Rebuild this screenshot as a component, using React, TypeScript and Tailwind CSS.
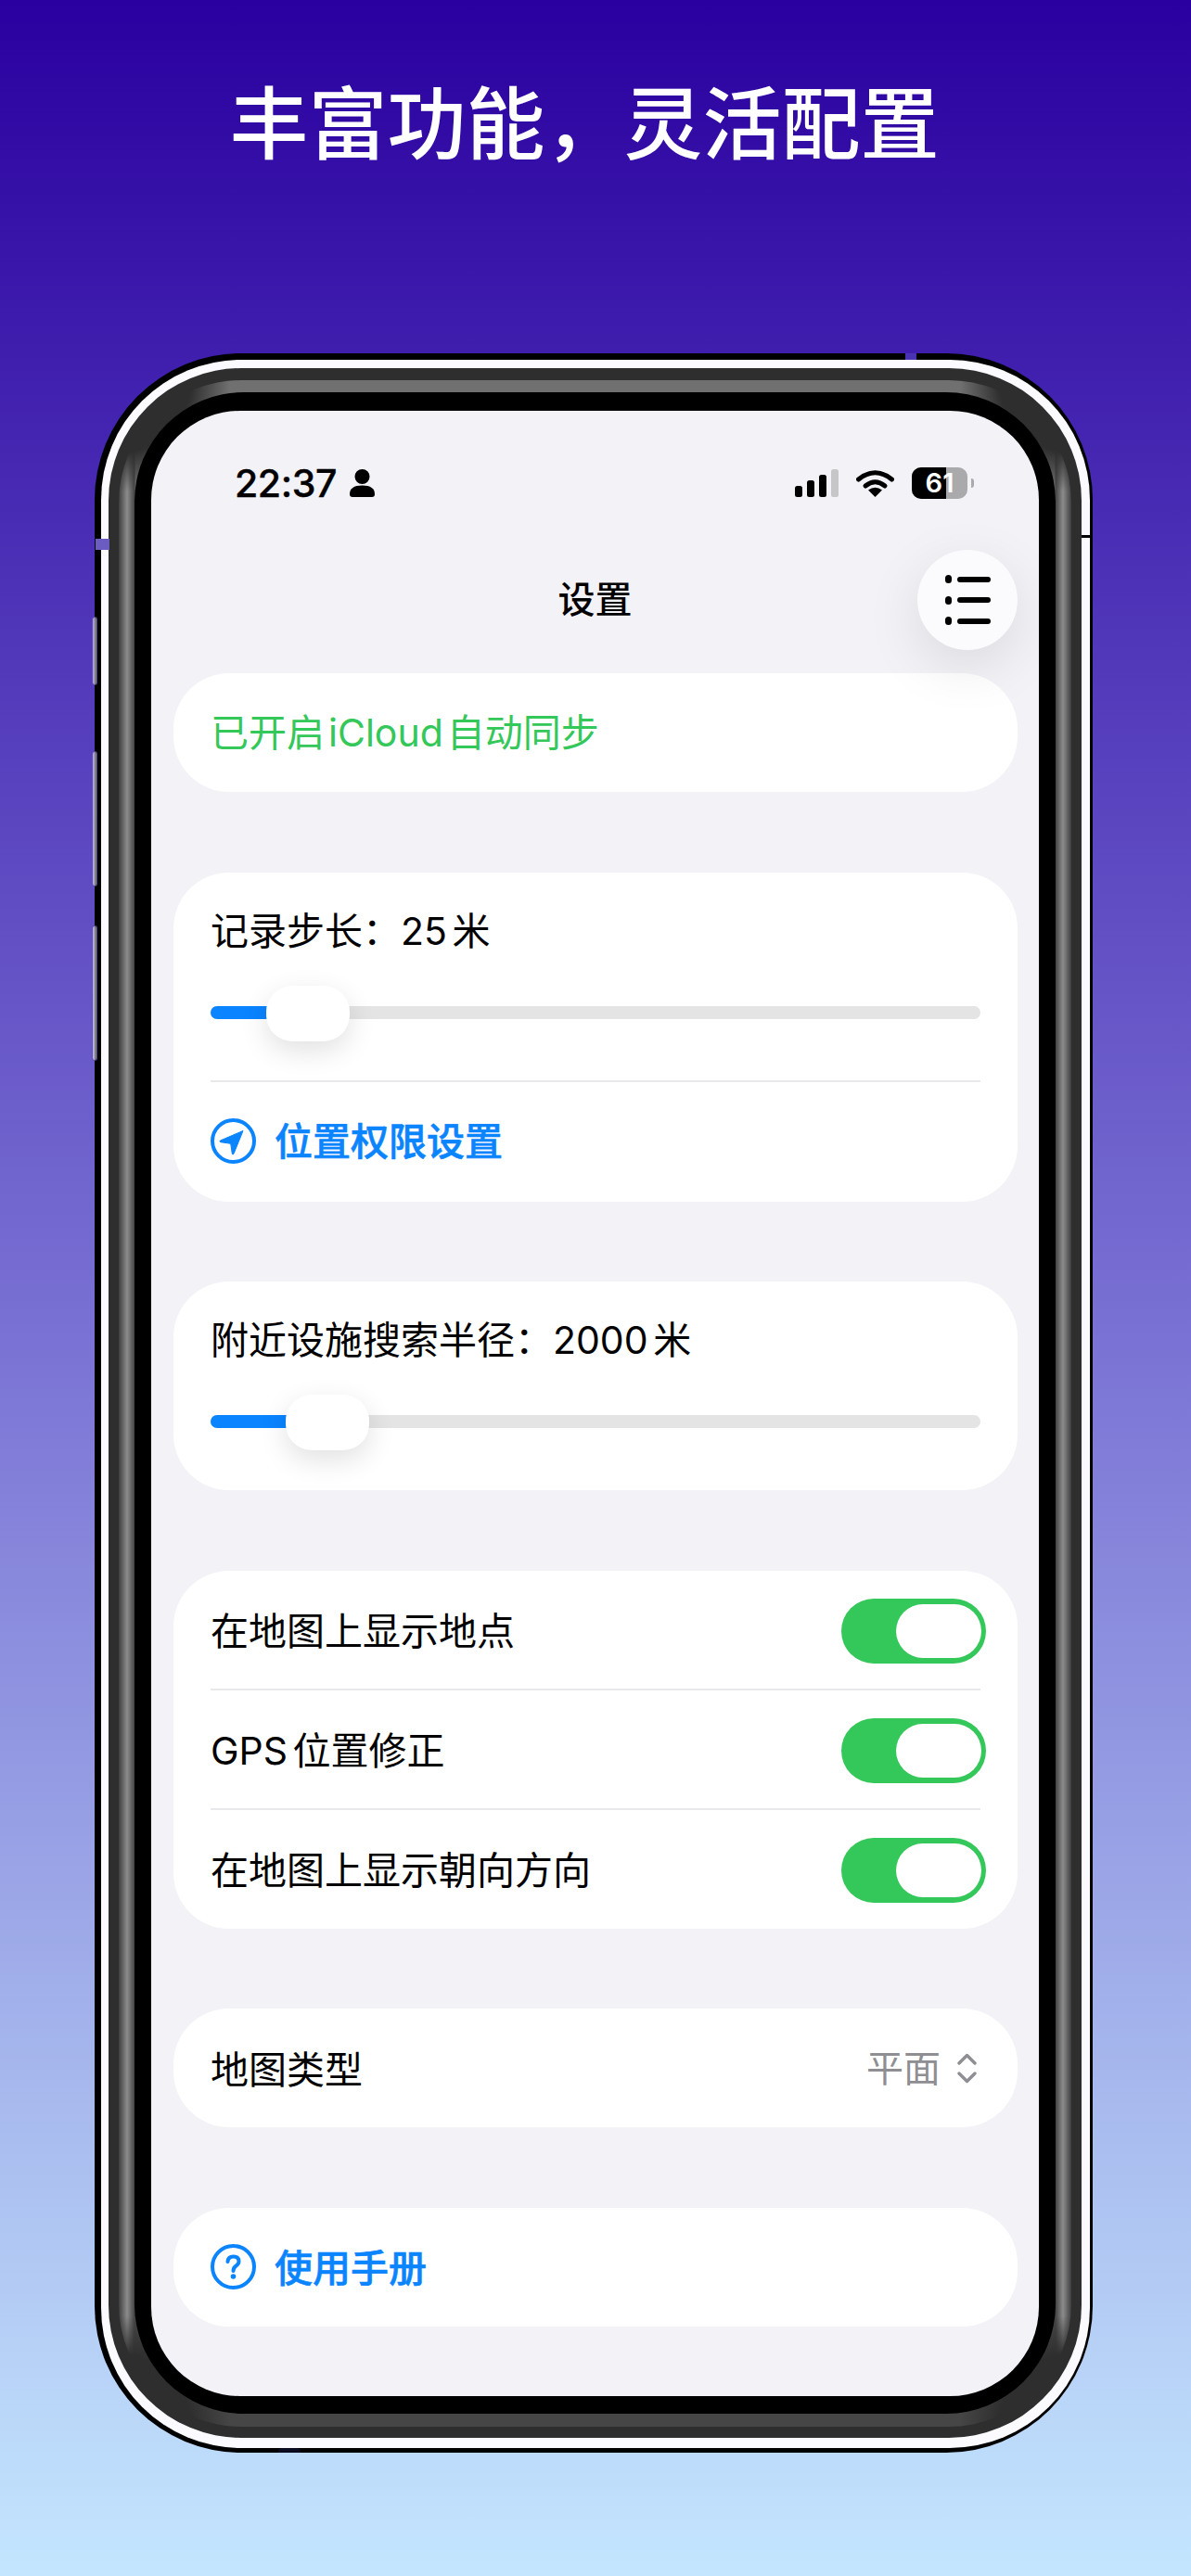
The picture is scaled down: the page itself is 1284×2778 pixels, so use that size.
function SideButton({ className }: { className: string }) {
  return (
    <div className={`absolute w-[6px] rounded-[3px] border border-[#2a1a80]/60 bg-white/50 ${className}`} />
  );
}

function Card({ children, className = '' }: { children: React.ReactNode; className?: string }) {
  return <div className={`rounded-[60px] bg-white px-10 ${className}`}>{children}</div>;
}

function Slider({ fill }: { fill: string }) {
  return (
    <div className="relative flex h-[60px] items-center pb-[2px]">
      <div className="h-[14px] w-full rounded-full bg-[#e4e4e5]" />
      <div className={`absolute left-0 top-[22px] h-[14px] rounded-l-full bg-[#0a84ff] ${fill}`} />
    </div>
  );
}

function Thumb({ className }: { className: string }) {
  return (
    <div
      className={`absolute top-0 h-[60px] w-[90px] rounded-[28px] bg-white shadow-[0_10px_30px_rgba(0,0,0,0.12)] ${className}`}
    />
  );
}

function Toggle() {
  return (
    <div className="-mr-[6px] flex h-[70px] w-[156px] items-center justify-end rounded-full bg-[#34c759] pr-[5px]">
      <div className="h-[58px] w-[92px] rounded-full bg-white" />
    </div>
  );
}

function ToggleRow({ label, border }: { label: string; border?: boolean }) {
  return (
    <div className={`flex h-[129px] items-center justify-between ${border ? 'border-b-2 border-[#e9e9eb] pt-[3px]' : 'pt-[2px]'}`}>
      <span className="text-[41px]/[56px] text-black [word-spacing:-6px]">{label}</span>
      <Toggle />
    </div>
  );
}

function LocationIcon() {
  return (
    <svg width="49" height="49" viewBox="0 0 49 49" fill="none">
      <circle cx="24.5" cy="24.5" r="22.5" stroke="#0a84ff" strokeWidth="4" />
      <path
        d="M35 13.5 L10.5 24 Q9 25 11 25.7 L21.7 27.3 L23.3 38 Q24 40 25 38.2 Z"
        fill="#0a84ff"
        stroke="#0a84ff"
        strokeWidth="1"
        strokeLinejoin="round"
      />
    </svg>
  );
}

function HelpIcon() {
  return (
    <svg width="49" height="49" viewBox="0 0 49 49" fill="none">
      <circle cx="24.5" cy="24.5" r="22.5" stroke="#0a84ff" strokeWidth="4" />
      <path
        d="M18.5 19 Q19 13.5 24.5 13.5 Q30.5 13.5 30.5 18.5 Q30.5 21.5 27.5 23.5 Q24.5 25.5 24.5 29"
        stroke="#0a84ff"
        strokeWidth="4"
        strokeLinecap="round"
      />
      <circle cx="24.5" cy="35" r="2.8" fill="#0a84ff" />
    </svg>
  );
}

function StatusBar() {
  return (
    <div className="flex h-[150px] items-center justify-between pl-[90px] pr-[70px] pt-[6px]">
      <div className="flex items-center gap-[14px]">
        <span className="text-[41px]/[48px] font-medium tracking-[-0.4px] text-black [-webkit-text-stroke:0.4px_#000]">22:37</span>
        <svg width="27" height="30" viewBox="0 0 27 30" fill="#000">
          <circle cx="13.5" cy="8" r="8" />
          <path d="M0 27 Q0 17.5 13.5 17.5 Q27 17.5 27 27 Q27 30 24 30 L3 30 Q0 30 0 27 Z" />
        </svg>
      </div>
      <div className="flex items-center">
        <div className="flex h-[30px] items-end gap-[5px]">
          <div className="h-[12px] w-[8px] rounded-[2.5px] bg-black" />
          <div className="h-[18px] w-[8px] rounded-[2.5px] bg-black" />
          <div className="h-[24px] w-[8px] rounded-[2.5px] bg-black" />
          <div className="h-[30px] w-[8px] rounded-[2.5px] bg-[#c6c6c8]" />
        </div>
        <svg className="ml-[19px]" width="41" height="30" viewBox="0 0 41 30" fill="none">
          <path d="M2.5 11 Q20.5 -3.5 38.5 11" stroke="#000" strokeWidth="5" strokeLinecap="round" />
          <path d="M10 18 Q20.5 9.5 31 18" stroke="#000" strokeWidth="5" strokeLinecap="round" />
          <path d="M20.5 30 L13 22.5 Q20.5 17 28 22.5 Z" fill="#000" />
        </svg>
        <div className="ml-[19px] flex items-center">
          <div className="relative flex h-[34px] w-[60px] items-center justify-center overflow-hidden rounded-[10px] bg-[#aaaaac]">
            <div className="absolute inset-y-0 left-0 w-[37px] bg-black" />
            <span className="relative text-[29px]/[34px] font-semibold text-white">61</span>
          </div>
          <div className="ml-[4px] h-[10px] w-[3px] rounded-r-full bg-[#aaaaac]" />
        </div>
      </div>
    </div>
  );
}

export default function App() {
  return (
    <div
      className="flex h-[2778px] w-[1284px] flex-col overflow-hidden bg-[linear-gradient(180deg,#2a00a0_0%,#7a72d4_52%,#c4e6fe_100%)]"
      style={{ fontFamily: 'Inter, "Noto Sans CJK SC", sans-serif' }}
    >
      <h1 className="mt-[82px] h-[106px] pr-[24px] text-center text-[85px]/[106px] font-medium text-white">
        丰富功能，灵活配置
      </h1>

      {/* Phone frame */}
      <div className="relative ml-[102px] mt-[193px] h-[2264px] w-[1076px] rounded-[158px] bg-black pb-[5px] pl-[7px] pr-[3px] pt-[7px]">
        <SideButton className="-left-[3px] top-[284px] h-[74px]" />
        <SideButton className="-left-[3px] top-[429px] h-[146px]" />
        <SideButton className="-left-[3px] top-[617px] h-[146px]" />
        <div className="absolute left-[874px] top-0 h-[7px] w-[12px] bg-[#4a32b4]" />
        <div className="absolute left-px top-[200px] h-[12px] w-[15px] bg-[#6a5cc0]" />
        <div className="absolute right-0 top-[196px] h-[3px] w-[12px] bg-black" />
        <div className="absolute left-[198px] bottom-0 h-[5px] w-[24px] rounded-t-sm bg-[#0a0a20]" />

        <div className="h-full w-full rounded-[151px] bg-[#fbfbff] pb-[11px] pl-[8px] pr-[9px] pt-[9px]">
          <div className="h-full w-full rounded-[143px] bg-[#2e2e2e] pb-[12px] pl-[11px] pr-[11px] pt-[13px]">
            <div className="h-full w-full rounded-[132px] bg-[radial-gradient(circle_at_0_0,#2e2e2e_0px,#2e2e2e_78px,transparent_120px),radial-gradient(circle_at_100%_0,#2e2e2e_0px,#2e2e2e_78px,transparent_120px),radial-gradient(circle_at_0_100%,#2e2e2e_0px,#2e2e2e_78px,transparent_120px),radial-gradient(circle_at_100%_100%,#2e2e2e_0px,#2e2e2e_78px,transparent_120px),linear-gradient(90deg,#3e3e3e_0px,#8c8c8c_9px,#444_17px,transparent_18px,transparent_calc(100%-18px),#444_calc(100%-17px),#8c8c8c_calc(100%-9px),#3e3e3e_100%),linear-gradient(180deg,#707070_0%,#707070_50%,#464646_50%,#464646_100%)] pb-[14px] pl-[17px] pr-[17px] pt-[13px]">
              <div className="h-full w-full rounded-[118px] bg-black pb-[19px] pl-[18px] pr-[18px] pt-[20px]">
                {/* Screen */}
                <div className="flex h-full w-full flex-col overflow-hidden rounded-[96px] bg-[#f2f2f7]">
                  <StatusBar />

                  <div className="relative flex h-[108px] shrink-0 items-center justify-center">
                    <span className="text-[40px]/[52px] font-medium text-black">设置</span>
                    <button className="absolute right-[23px] top-0 flex h-[108px] w-[108px] flex-col items-center justify-center gap-[13.5px] rounded-full bg-[#fbfbfd] shadow-[0_18px_60px_rgba(0,0,0,0.1)]">
                      {[0, 1, 2].map((i) => (
                        <div key={i} className="flex items-center gap-[6px]">
                          <div className="h-[9px] w-[7px] rounded-full bg-black" />
                          <div className="h-[6px] w-[36px] rounded-full bg-black" />
                        </div>
                      ))}
                    </button>
                  </div>

                  <div className="ml-6 mr-[23px] mt-[25px] flex flex-col gap-[86.5px]">
                    <Card className="flex h-[128px] items-center">
                      <span className="text-[41px]/[56px] text-[#34c759] [word-spacing:-7.5px]">已开启 iCloud 自动同步</span>
                    </Card>

                    <Card className="h-[355px]">
                      <div className="pt-[35px] text-[41px]/[56px] text-black [word-spacing:-6px]">记录步长：25 米</div>
                      <div className="relative mt-[31px]">
                        <Slider fill="w-[70px]" />
                        <Thumb className="left-[60px]" />
                      </div>
                      <div className="mt-[42px] flex h-[130px] items-center gap-[20px] border-t-2 border-[#e9e9eb]">
                        <LocationIcon />
                        <span className="text-[41px]/[56px] font-medium text-[#0a84ff] [-webkit-text-stroke:0.6px_#0a84ff]">位置权限设置</span>
                      </div>
                    </Card>

                    <Card className="h-[225px]">
                      <div className="pt-[35px] text-[41px]/[56px] text-black [word-spacing:-6px]">附近设施搜索半径：2000 米</div>
                      <div className="relative mt-[31px]">
                        <Slider fill="w-[90px]" />
                        <Thumb className="left-[81px]" />
                      </div>
                    </Card>

                    <Card className="h-[386px]">
                      <ToggleRow label="在地图上显示地点" border />
                      <ToggleRow label="GPS 位置修正" border />
                      <ToggleRow label="在地图上显示朝向方向" />
                    </Card>

                    <Card className="flex h-[128px] items-center justify-between">
                      <span className="pt-[3px] text-[41px]/[56px] text-black">地图类型</span>
                      <div className="mr-[4px] flex items-center gap-[18px]">
                        <span className="pt-[2px] text-[40px]/[56px] text-[#8e8e93]">平面</span>
                        <svg width="21" height="33" viewBox="0 0 21 33" fill="none">
                          <path
                            d="M2 11 L10.5 2.5 L19 11 M2 22 L10.5 30.5 L19 22"
                            stroke="#8e8e93"
                            strokeWidth="3.4"
                            strokeLinecap="round"
                            strokeLinejoin="round"
                          />
                        </svg>
                      </div>
                    </Card>

                    <Card className="flex h-[128px] items-center gap-[20px]">
                      <HelpIcon />
                      <span className="pt-[2px] text-[41px]/[56px] font-medium text-[#0a84ff] [-webkit-text-stroke:0.6px_#0a84ff]">使用手册</span>
                    </Card>
                  </div>
                </div>
              </div>
            </div>
          </div>
        </div>
      </div>
    </div>
  );
}
